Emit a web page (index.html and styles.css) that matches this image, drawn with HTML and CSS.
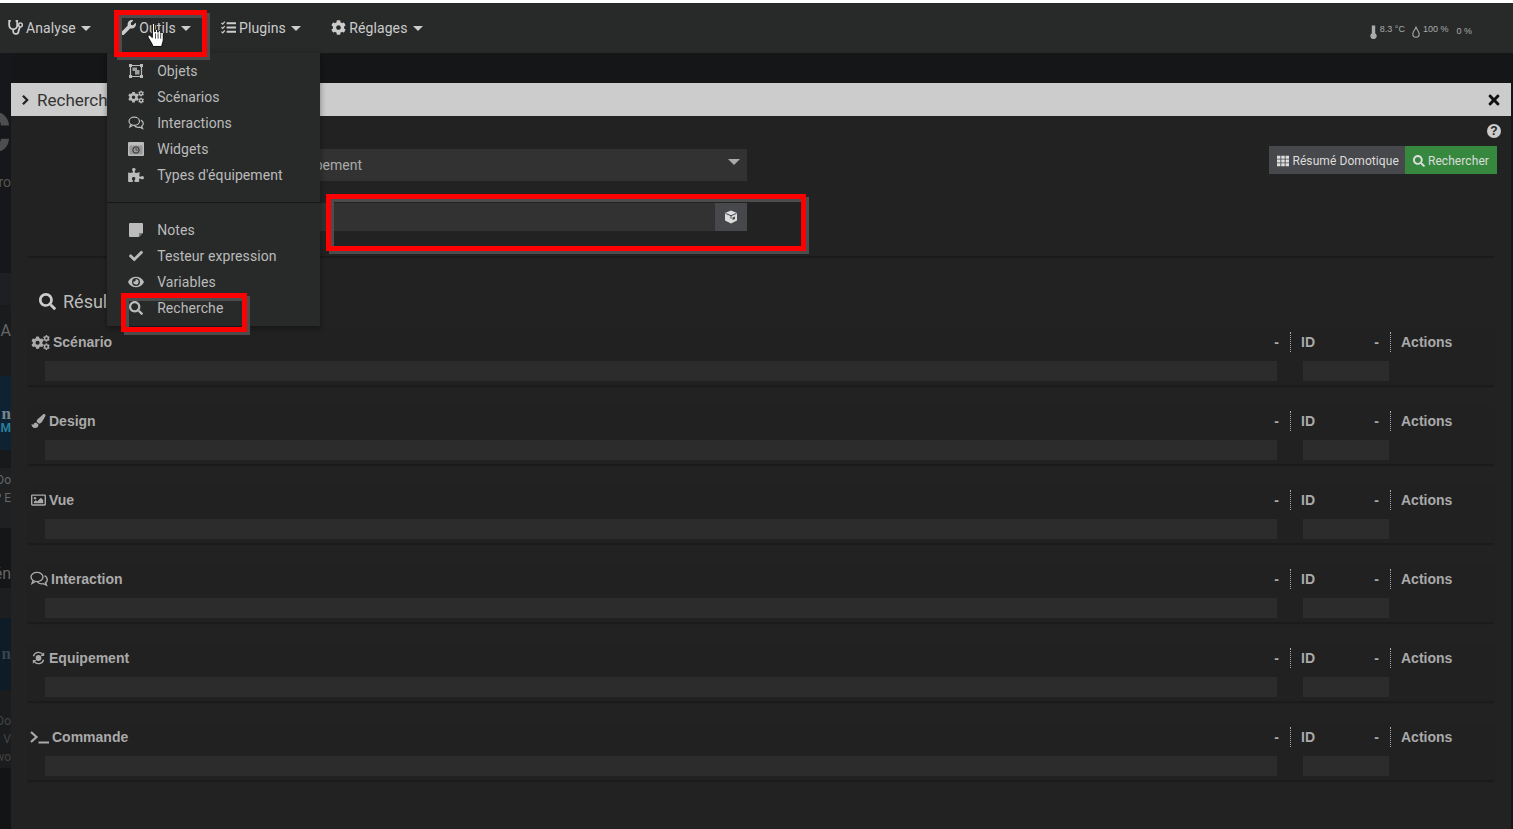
FILE: index.html
```html
<!DOCTYPE html>
<html lang="fr">
<head>
<meta charset="utf-8">
<title>Recherche</title>
<link rel="stylesheet" href="styles.css">
</head>
<body>
<svg class="defs" width="0" height="0" aria-hidden="true">
  <defs>
    <path id="p-cog" d="M487.4 315.7l-42.6-24.6c4.3-23.2 4.3-47 0-70.2l42.6-24.6c4.9-2.8 7.1-8.6 5.5-14-11.1-35.6-30-67.8-54.7-94.6-3.8-4.1-10-5.1-14.8-2.3L380.8 110c-17.9-15.4-38.5-27.3-60.8-35.1V25.8c0-5.6-3.9-10.5-9.4-11.7-36.7-8.2-74.3-7.8-109.2 0-5.5 1.2-9.4 6.1-9.4 11.7V75c-22.2 7.9-42.8 19.8-60.8 35.1L88.7 85.5c-4.9-2.8-11-1.9-14.8 2.3-24.7 26.7-43.6 58.9-54.7 94.6-1.7 5.4.6 11.2 5.5 14L67.3 221c-4.3 23.2-4.3 47 0 70.2l-42.6 24.6c-4.9 2.8-7.1 8.6-5.5 14 11.1 35.6 30 67.8 54.7 94.6 3.8 4.1 10 5.1 14.8 2.3l42.6-24.6c17.9 15.4 38.5 27.3 60.8 35.1v49.2c0 5.6 3.9 10.5 9.4 11.7 36.7 8.2 74.3 7.8 109.2 0 5.5-1.2 9.4-6.1 9.4-11.7v-49.2c22.2-7.9 42.8-19.8 60.8-35.1l42.6 24.6c4.9 2.8 11 1.9 14.8-2.3 24.7-26.7 43.6-58.9 54.7-94.6 1.5-5.5-.7-11.3-5.6-14.1zM256 336c-44.1 0-80-35.9-80-80s35.9-80 80-80 80 35.9 80 80-35.9 80-80 80z"/>
    <symbol id="i-search" viewBox="0 0 512 512"><path fill="currentColor" d="M505 442.7L405.3 343c-4.5-4.5-10.6-7-17-7H372c27.6-35.3 44-79.7 44-128C416 93.1 322.9 0 208 0S0 93.1 0 208s93.1 208 208 208c48.3 0 92.7-16.4 128-44v16.3c0 6.4 2.5 12.5 7 17l99.7 99.7c9.4 9.4 24.6 9.4 33.9 0l28.3-28.3c9.4-9.4 9.4-24.6.1-34zM208 336c-70.7 0-128-57.2-128-128 0-70.7 57.2-128 128-128 70.7 0 128 57.2 128 128 0 70.7-57.2 128-128 128z"/></symbol>
    <symbol id="i-check" viewBox="0 0 512 512"><path fill="currentColor" d="M173.898 439.404l-166.4-166.4c-9.997-9.997-9.997-26.206 0-36.204l36.203-36.204c9.997-9.998 26.207-9.998 36.204 0L192 312.69 432.095 72.596c9.997-9.997 26.207-9.997 36.204 0l36.203 36.204c9.997 9.997 9.997 26.206 0 36.204l-294.4 294.401c-9.998 9.997-26.207 9.997-36.204-.001z"/></symbol>
    <symbol id="i-wrench" viewBox="0 0 512 512"><path fill="currentColor" d="M507.73 109.1c-2.24-9.03-13.54-12.09-20.12-5.51l-74.36 74.36-67.88-11.31-11.31-67.88 74.36-74.36c6.62-6.62 3.43-17.9-5.66-20.16-47.38-11.74-99.55.91-136.58 37.93-39.64 39.64-50.55 97.1-34.05 147.2L18.74 402.76c-24.99 24.99-24.99 65.51 0 90.5 24.99 24.99 65.51 24.99 90.5 0l213.21-213.21c50.12 16.71 107.47 5.68 147.37-34.22 37.07-37.07 49.7-89.32 37.91-136.73z"/></symbol>
    <symbol id="i-times" viewBox="0 0 352 512"><path fill="currentColor" d="M242.72 256l100.07-100.07c12.28-12.28 12.28-32.19 0-44.48l-22.24-22.24c-12.28-12.28-32.19-12.28-44.48 0L176 189.28 75.93 89.21c-12.28-12.28-32.19-12.28-44.48 0L9.21 111.45c-12.28 12.28-12.28 32.19 0 44.48L109.28 256 9.21 356.07c-12.28 12.28-12.28 32.19 0 44.48l22.24 22.24c12.28 12.28 32.2 12.28 44.48 0L176 322.72l100.07 100.07c12.28 12.28 32.2 12.28 44.48 0l22.24-22.24c12.28-12.28 12.28-32.19 0-44.48L242.72 256z"/></symbol>
    <symbol id="i-eye" viewBox="0 0 576 512"><path fill="currentColor" d="M572.52 241.4C518.29 135.59 410.93 64 288 64S57.68 135.64 3.48 241.41a32.35 32.35 0 0 0 0 29.19C57.71 376.41 165.07 448 288 448s230.32-71.64 284.52-177.41a32.35 32.35 0 0 0 0-29.19zM288 400a144 144 0 1 1 144-144 143.93 143.93 0 0 1-144 144zm0-240a95.31 95.31 0 0 0-25.31 3.79 47.85 47.85 0 0 1-66.9 66.9A95.78 95.78 0 1 0 288 160z"/></symbol>
    <symbol id="i-cog" viewBox="0 0 512 512"><use href="#p-cog" fill="currentColor"/></symbol>
    <symbol id="i-cogs" viewBox="0 0 640 512"><use href="#p-cog" fill="currentColor" transform="translate(0 45) scale(.86)"/><use href="#p-cog" fill="currentColor" transform="translate(405 0) scale(.46)"/><use href="#p-cog" fill="currentColor" transform="translate(405 280) scale(.46)"/></symbol>
    <symbol id="i-puzzle" viewBox="0 0 576 512"><path fill="currentColor" d="M519.442 288.651c-41.519 0-59.5 31.593-82.058 31.593C377.409 320.244 432 144 432 144s-196.288 80-196.288-3.297c0-35.827 36.288-46.25 36.288-85.985C272 19.216 243.885 0 210.539 0c-34.654 0-66.366 18.891-66.366 56.346 0 41.364 31.711 59.277 31.711 81.75C175.885 207.719 0 166.758 0 166.758v333.237s178.635 41.047 178.635-28.662c0-22.473-40-40.107-40-81.471 0-37.456 29.25-56.346 63.577-56.346 33.673 0 61.788 19.216 61.788 54.717 0 39.735-36.288 50.158-36.288 85.985 0 60.803 129.675 25.73 181.23 25.73 0 0-34.725-120.101 25.827-120.101 35.962 0 46.423 36.152 86.308 36.152C556.712 416 576 387.99 576 354.443c0-34.199-18.962-65.792-56.558-65.792z"/></symbol>
    <symbol id="i-brush" viewBox="0 0 512 512"><path fill="currentColor" d="M167.02 309.34c-40.12 2.58-76.53 17.86-97.19 72.3-2.35 6.21-8 9.98-14.59 9.98-11.11 0-45.46-27.67-55.25-34.35C0 439.62 37.93 512 128 512c75.86 0 128-43.77 128-120.19 0-3.11-.65-6.08-.97-9.13l-88.01-73.34zM457.89 0c-15.16 0-29.37 6.71-40.21 16.45C213.27 199.05 192 203.34 192 257.09c0 13.7 3.25 26.76 8.73 38.7l63.82 53.18c7.21 1.8 14.64 3.03 22.39 3.03 62.11 0 98.11-45.47 211.16-256.46 7.38-14.35 13.9-29.85 13.9-45.99C512 20.64 486 0 457.89 0z"/></symbol>
    <symbol id="i-stetho" viewBox="0 0 15 15"><path fill="none" stroke="currentColor" stroke-width="1.800" d="M2.800.9H1.200v4.300a4 4 0 0 0 8 0V.9H7.600M5.200 9.200v1.800a2.600 2.600 0 0 0 5.300.5c.3-1.300.7-3 1.600-4.500"/><circle cx="12.500" cy="5" r="1.900" fill="none" stroke="currentColor" stroke-width="1.500"/></symbol>
    <symbol id="i-tasks" viewBox="0 0 16 14"><path fill="currentColor" d="M6 1.500h10v2H6zM6 6h10v2H6zM6 10.500h10v2H6z"/><path fill="none" stroke="currentColor" stroke-width="1.300" d="M.5 2l1.300 1.300L4 .8M.5 6.700L1.800 8 4 5.500M.5 11.400l1.300 1.300L4 10.200"/></symbol>
    <symbol id="i-object" viewBox="0 0 14 14"><path fill="none" stroke="currentColor" stroke-width="1.200" d="M1.500 1.500h11v11h-11z"/><path fill="currentColor" d="M0 0h3v3H0zM11 0h3v3h-3zM0 11h3v3H0zM11 11h3v3h-3z"/><path fill="currentColor" opacity=".8" d="M3.500 3.500h4.500v3.500H3.500zM6 6h4.500v4.500H6z"/></symbol>
    <symbol id="i-comments" viewBox="0 0 18 16"><g fill="none" stroke="currentColor" stroke-width="1.400"><ellipse cx="7" cy="6" rx="6" ry="4.600"/><path d="M3 9.500L2 12.500l3.500-2"/><path d="M14.600 4.700c1.700.9 2.700 2.200 2.700 3.800 0 1.300-.7 2.400-1.800 3.200l1 2.500-3.200-1.500c-2.500.5-5-.3-6.200-2"/></g></symbol>
    <symbol id="i-widget" viewBox="0 0 16 14"><path fill="currentColor" fill-rule="evenodd" d="M1 0h14a1 1 0 0 1 1 1v12a1 1 0 0 1-1 1H1a1 1 0 0 1-1-1V1a1 1 0 0 1 1-1zM1.500 3.500v9h13v-9z"/><rect x="1" y="3" width="14" height="10" fill="currentColor" opacity=".75"/><circle cx="8" cy="8" r="3.200" fill="none" stroke="#282a2a" stroke-width="1"/><path d="M8 6.300V8h1.500" fill="none" stroke="#282a2a" stroke-width=".8"/></symbol>
    <symbol id="i-note" viewBox="0 0 14 14"><path fill="currentColor" d="M1 0h12a1 1 0 0 1 1 1v8.500L9.500 14H1a1 1 0 0 1-1-1V1a1 1 0 0 1 1-1z"/><path fill="#777" d="M10 10h4l-4 4z"/></symbol>
    <symbol id="i-image" viewBox="0 0 16 14"><path fill="currentColor" fill-rule="evenodd" d="M1.500 1h13A1.500 1.500 0 0 1 16 2.500v9a1.500 1.500 0 0 1-1.500 1.500h-13A1.500 1.500 0 0 1 0 11.500v-9A1.500 1.500 0 0 1 1.500 1zm0 1.500v9h13v-9z"/><circle cx="4.300" cy="5" r="1.300" fill="currentColor"/><path fill="currentColor" d="M3 10.500V9l2-2 1.500 1.500L10.500 4.500 13 7v3.500z"/></symbol>
    <symbol id="i-cycle" viewBox="0 0 16 16"><g fill="none" stroke="currentColor" stroke-width="1.500"><path d="M2.200 6A6 6 0 0 1 13 4.200"/><path d="M13.800 10A6 6 0 0 1 3 11.800"/></g><path fill="currentColor" d="M14.500 1.500v4.300h-4.300zM1.500 14.500v-4.300h4.300z"/><circle cx="8" cy="8" r="3.300" fill="currentColor"/></symbol>
    <symbol id="i-terminal" viewBox="0 0 19 13"><path fill="none" stroke="currentColor" stroke-width="2.200" d="M1 1l5.500 5L1 11"/><path fill="currentColor" d="M8.500 10.500H19v2H8.500z"/></symbol>
    <symbol id="i-cube" viewBox="0 0 14 14"><path fill="currentColor" d="M7 .5L1 2.900v7.600L7 13.500l6-3V2.900z"/><path fill="none" stroke="#47484b" stroke-width="1" d="M1.500 3.400L7 5.700l5.500-2.300M7 5.700v3"/><path fill="#47484b" d="M8.500 7.500l2.500-1v2.500l-2.500 1z"/></symbol>
    <symbol id="i-grid" viewBox="0 0 14 12"><path fill="currentColor" d="M0 0h4v3.500H0zM5 0h4v3.500H5zM10 0h4v3.500h-4zM0 4.250h4v3.500H0zM5 4.250h4v3.500H5zM10 4.250h4v3.500h-4zM0 8.500h4V12H0zM5 8.500h4V12H5zM10 8.500h4V12h-4z"/></symbol>
    <symbol id="i-chevron" viewBox="0 0 10 14"><path fill="none" stroke="currentColor" stroke-width="2.600" d="M2 2l5 5-5 5"/></symbol>
    <symbol id="i-thermo" viewBox="0 0 7 14"><path fill="currentColor" d="M1.800.5h3.400V8.300a3.200 3.200 0 1 1-3.400 0z"/></symbol>
    <symbol id="i-drop" viewBox="0 0 8 12"><path fill="none" stroke="currentColor" stroke-width="1.100" d="M4 1.200C3 3.800.8 5.500.8 8a3.200 3.200 0 0 0 6.400 0C7.200 5.500 5 3.800 4 1.200z"/></symbol>
  </defs>
</svg>

<div class="page">
  <div class="whiteline"></div>

  <header class="navbar">
    <nav class="nav">
      <a class="nav-item"><svg class="ico ico-14"><use href="#i-stetho"/></svg>Analyse<i class="caret"></i></a>
      <a class="nav-item nav-tools"><svg class="ico ico-14"><use href="#i-wrench"/></svg>Outils<i class="caret"></i>
        <div class="dropdown">
          <ul class="menu">
            <li><svg class="ico ico-menu"><use href="#i-object"/></svg>Objets</li>
            <li><svg class="ico ico-menu"><use href="#i-cogs"/></svg>Scénarios</li>
            <li><svg class="ico ico-menu"><use href="#i-comments"/></svg>Interactions</li>
            <li><svg class="ico ico-menu"><use href="#i-widget"/></svg>Widgets</li>
            <li><svg class="ico ico-menu"><use href="#i-puzzle"/></svg>Types d'équipement</li>
          </ul>
          <div class="menu-divider"></div>
          <ul class="menu">
            <li><svg class="ico ico-menu"><use href="#i-note"/></svg>Notes</li>
            <li><svg class="ico ico-menu"><use href="#i-check"/></svg>Testeur expression</li>
            <li><svg class="ico ico-menu"><use href="#i-eye"/></svg>Variables</li>
            <li><svg class="ico ico-menu"><use href="#i-search"/></svg>Recherche</li>
          </ul>
        </div>
      </a>
      <a class="nav-item"><svg class="ico ico-14"><use href="#i-tasks"/></svg>Plugins<i class="caret"></i></a>
      <a class="nav-item"><svg class="ico ico-14"><use href="#i-cog"/></svg>Réglages<i class="caret"></i></a>
    </nav>
    <div class="weather">
      <svg class="thermo"><use href="#i-thermo"/></svg><span>8.3 °C</span>
      <svg class="drop"><use href="#i-drop"/></svg><span>100 %</span>
      <span class="wind">0 %</span>
    </div>
  </header>

  <div class="stage">
    <aside class="rail">
      <div class="rail-block rail-top"><div class="rail-big">C</div><div class="rail-ro">ro</div></div>
      <div class="rail-block rail-band1"></div>
      <div class="rail-block rail-band2"><div class="rail-a">A</div></div>
      <div class="rail-block rail-blue"><span class="rail-n">n</span><span class="rail-m">M</span></div>
      <div class="rail-block rail-gap"></div>
      <div class="rail-block rail-card"><div class="rail-line rail-do">Do</div><div class="rail-line">P E</div></div>
      <div class="rail-block rail-band3"><div class="rail-a">én</div></div>
      <div class="rail-block rail-band4"></div>
      <div class="rail-block rail-blue2"><span class="rail-n">n</span></div>
      <div class="rail-block rail-card2"><div class="rail-line">Do</div><div class="rail-line">V</div><div class="rail-line">wo</div></div>
    </aside>

    <main class="modal">
      <div class="modal-head">
        <svg class="chevron"><use href="#i-chevron"/></svg>
        <span class="modal-title">Recherche</span>
        <svg class="close"><use href="#i-times"/></svg>
      </div>
      <div class="modal-body">
        <div class="help"><span class="help-dot">?</span></div>
        <div class="toolbar">
          <form class="search-form">
            <div class="select"><span>Type d'équipement</span><i class="select-arrow"></i></div>
            <div class="input-group"><div class="input"></div><span class="input-btn"><svg class="ico ico-cube"><use href="#i-cube"/></svg></span></div>
          </form>
          <div class="actions">
            <a class="btn btn-grey"><svg class="ico ico-btn"><use href="#i-grid"/></svg>Résumé Domotique</a>
            <a class="btn btn-green"><svg class="ico ico-btn"><use href="#i-search"/></svg>Rechercher</a>
          </div>
        </div>
        <div class="rule"></div>
        <h2 class="results-title"><svg class="ico ico-title"><use href="#i-search"/></svg>Résultats</h2>

        <section class="result">
          <div class="col-name"><span class="label"><svg class="ico ico-l18"><use href="#i-cogs"/></svg>Scénario</span><span class="dash">-</span></div>
          <div class="col-id"><span class="label">ID</span><span class="dash">-</span></div>
          <div class="col-act"><span class="label">Actions</span></div>
          <div class="bar bar-name"></div><div class="bar bar-id"></div>
        </section>
        <section class="result">
          <div class="col-name"><span class="label"><svg class="ico ico-l14"><use href="#i-brush"/></svg>Design</span><span class="dash">-</span></div>
          <div class="col-id"><span class="label">ID</span><span class="dash">-</span></div>
          <div class="col-act"><span class="label">Actions</span></div>
          <div class="bar bar-name"></div><div class="bar bar-id"></div>
        </section>
        <section class="result">
          <div class="col-name"><span class="label"><svg class="ico ico-l14"><use href="#i-image"/></svg>Vue</span><span class="dash">-</span></div>
          <div class="col-id"><span class="label">ID</span><span class="dash">-</span></div>
          <div class="col-act"><span class="label">Actions</span></div>
          <div class="bar bar-name"></div><div class="bar bar-id"></div>
        </section>
        <section class="result">
          <div class="col-name"><span class="label"><svg class="ico ico-l16"><use href="#i-comments"/></svg>Interaction</span><span class="dash">-</span></div>
          <div class="col-id"><span class="label">ID</span><span class="dash">-</span></div>
          <div class="col-act"><span class="label">Actions</span></div>
          <div class="bar bar-name"></div><div class="bar bar-id"></div>
        </section>
        <section class="result">
          <div class="col-name"><span class="label"><svg class="ico ico-l14"><use href="#i-cycle"/></svg>Equipement</span><span class="dash">-</span></div>
          <div class="col-id"><span class="label">ID</span><span class="dash">-</span></div>
          <div class="col-act"><span class="label">Actions</span></div>
          <div class="bar bar-name"></div><div class="bar bar-id"></div>
        </section>
        <section class="result">
          <div class="col-name"><span class="label"><svg class="ico ico-term"><use href="#i-terminal"/></svg>Commande</span><span class="dash">-</span></div>
          <div class="col-id"><span class="label">ID</span><span class="dash">-</span></div>
          <div class="col-act"><span class="label">Actions</span></div>
          <div class="bar bar-name"></div><div class="bar bar-id"></div>
        </section>
      </div>
    </main>
  </div>

  <div class="mark mark-tools"></div>
  <div class="mark mark-input"></div>
  <div class="mark mark-search"></div>
  <svg class="hand" viewBox="0 0 17 24"><path fill="#fff" stroke="#000" stroke-width=".9" stroke-linejoin="round" d="M5 1.500c0-1.300 2.200-1.300 2.200 0v7l.8-.2V7c0-1 2-1 2 .2v1.500l.8.1V8c0-1 2-1 2 .3v1l.7.2c0-1 2-.8 2 .5v6c0 2-1 3-1.500 6.500H5.500C5 19.500 1.500 15.500.8 13.500c-.5-1.500 1-2.500 2-1.500L5 14z"/><path stroke="#000" stroke-width=".7" d="M8 10v5M10.500 10v5M13 10v5"/></svg>
</div>
</body>
</html>
```
FILE: styles.css
```css
* { box-sizing: border-box; }
html, body { margin: 0; padding: 0; height: 100%; overflow: hidden; }
body { background: #141618; font-family: Roboto, "Liberation Sans", sans-serif; font-size: 14px; color: #bbb; }
.defs { position: absolute; }
ul { list-style: none; margin: 0; padding: 0; }
h2 { margin: 0; }

.page { position: relative; width: 1513px; height: 829px; overflow: hidden; }
.whiteline { height: 3px; background: #fff; }

.ico { color: inherit; flex: none; display: block; }

/* top bar */
.navbar { height: 50px; background: #282a2a; display: flex; justify-content: space-between; }
.nav { display: flex; padding-left: 8px; gap: 30px; }
.nav-item { position: relative; display: flex; align-items: center; height: 50px; color: #ccc; padding-bottom: 1px; letter-spacing: .1px; }
.ico-14 { width: 15px; height: 15px; margin-right: 3px; }
.caret { width: 0; height: 0; margin-left: 5.300px; margin-top: 2px; border-left: 5px solid transparent; border-right: 5px solid transparent; border-top: 5px solid #ccc; }
.weather { display: flex; align-items: flex-start; padding: 20px 41px 0 0; font-family: "Liberation Sans", sans-serif; font-size: 9px; line-height: 12px; color: #aaa; }
.thermo { width: 7px; height: 14px; color: #aaa; margin: 2px 3px 0 0; }
.drop { width: 8px; height: 12px; color: #aaa; margin: 3px 3px 0 7px; }
.wind { margin: 2px 0 0 8px; }

/* dropdown */
.dropdown { position: absolute; left: -14px; top: 50px; width: 213px; height: 273px; background: #282a2a; box-shadow: 0 2px 6px rgba(0,0,0,.4); padding-top: 5px; z-index: 5; letter-spacing: 0; }
.menu li { height: 26px; display: flex; align-items: center; padding-left: 21px; color: #bbb; font-size: 14px; letter-spacing: .07px; }
.ico-menu { width: 16px; height: 14px; margin-right: 13px; color: #bbb; }
.menu-divider { height: 1px; background: #151617; margin: 14px 0 14px; }

/* stage */
.stage { display: flex; height: 776px; }
.rail { width: 11px; overflow: hidden; background: #121416; color: #666; white-space: nowrap; direction: rtl; flex: none; display: flex; flex-direction: column; }
.rail-block { flex: none; }
.rail-top { height: 220px; background: #15171a; padding-top: 55px; }
.rail-big { font: 700 56px/50px Roboto, sans-serif; color: #4d4e50; height: 50px; }
.rail-ro { font: 14px/16px Roboto, sans-serif; color: #555; margin-top: 16px; height: 16px; }
.rail-band1 { height: 32px; background: #1d1f22; }
.rail-band2 { height: 71px; background: #191b1d; padding-top: 17px; }
.rail-a { font: 16px/18px Roboto, sans-serif; height: 18px; color: #666; }
.rail-blue { height: 74px; background: #0d2233; display: flex; flex-direction: column; padding-top: 29px; }
.rail-n { font: 700 17px/17px "Liberation Serif", serif; color: #77858f; }
.rail-m { font: 700 12px/12px Roboto, sans-serif; color: #2a7d98; }
.rail-gap { height: 18px; background: #17191b; }
.rail-card { height: 60px; background: #1e2022; padding-top: 3px; }
.rail-line { font: 12px/18px Roboto, sans-serif; height: 18px; color: #666; }
.rail-band3 { height: 60px; background: #141618; padding-top: 37px; }
.rail-band4 { height: 30px; background: #1c1e20; }
.rail-blue2 { height: 72px; background: #0e1c28; padding-top: 27px; }
.rail-blue2 .rail-n { color: #39444c; }
.rail-card2 { height: 78px; background: #1a1c1e; padding-top: 22px; }
.rail-card2 .rail-line { color: #444; }

.modal { width: 1500px; flex: none; margin-top: 30px; background: #222; }
.modal-head { height: 33px; background: #ccc; color: #333; display: flex; align-items: center; padding: 0 11px 0 10px; }
.chevron { width: 9px; height: 12px; color: #222; margin-right: 7px; }
.modal-title { font-size: 17px; flex: 1; }
.close { width: 12px; height: 16px; color: #111; }

.modal-body { padding: 8px 17px 0 17px; }
.help { display: flex; justify-content: flex-end; height: 14px; margin-right: -7px; }
.help-dot { width: 14px; height: 14px; border-radius: 50%; background: #ccc; color: #222; font: 700 12px/14px "Liberation Sans", sans-serif; text-align: center; }
.toolbar { display: flex; justify-content: space-between; margin-top: 8px; }
.search-form { margin: 3px 0 0 200px; width: 519px; }
.select { height: 32px; background: #323232; color: #aaa; display: flex; align-items: center; justify-content: space-between; padding: 0 7px 0 17px; font-size: 14px; position: relative; }
.select-arrow { width: 0; height: 0; margin-top: -6px; border-left: 6px solid transparent; border-right: 6px solid transparent; border-top: 6px solid #aaa; }
.input-group { display: flex; height: 28px; margin-top: 22px; background: #323232; }
.input { flex: 1; }
.input-btn { width: 32px; background: #47484b; display: flex; align-items: center; justify-content: center; }
.ico-cube { width: 14px; height: 14px; color: #ddd; }
.actions { display: flex; height: 28px; margin-right: -3px; }
.btn { display: flex; align-items: center; height: 28px; padding-top: 1px; font-size: 12px; color: #ddd; letter-spacing: .08px; }
.btn-grey { background: #47484b; padding-left: 8px; padding-right: 6px; }
.btn-green { background: #37883f; padding-left: 8px; padding-right: 8px; }
.ico-btn { width: 12px; height: 12px; margin-right: 3px; }

.rule { height: 2px; background: #1a1a1a; margin-top: 25px; }
.results-title { display: flex; align-items: center; height: 20px; margin: 33px 0 16px 11px; font-size: 18px; font-weight: 400; color: #bbb; white-space: nowrap; }
.ico-title { width: 17px; height: 17px; margin-right: 7px; color: #ccc; }

/* result tables */
.result { display: grid; grid-template-columns: 1262px 100px 104px; grid-template-rows: 34px 20px 4px; height: 58px; margin-bottom: 21px; background: #212121; box-shadow: 0 2px 1px #1b1b1b; }
.col-name, .col-id, .col-act { display: flex; align-items: center; justify-content: space-between; height: 20px; margin-top: 5px; }
.col-name { padding: 0 11px 0 3px; }
.col-id { padding: 0 11px 0 10px; border-left: 1px dotted #aaa; }
.col-act { padding-left: 10px; border-left: 1px dotted #aaa; }
.label { display: flex; align-items: center; font-family: "Liberation Sans", sans-serif; font-weight: 700; font-size: 14px; color: #aaa; white-space: nowrap; }
.dash { font-family: "Liberation Sans", sans-serif; font-weight: 700; color: #aaa; }
.ico-l18 { width: 19px; height: 15px; margin-right: 3px; }
.ico-l14 { width: 15px; height: 14px; margin-right: 3px; }
.ico-l16 { width: 18px; height: 16px; margin: 0 3px 0 -1px; }
.ico-term { width: 19px; height: 13px; margin: 0 3px 0 -1px; }
.bar { background: #2c2c2c; height: 20px; grid-row: 2; }
.bar-name { grid-column: 1; margin: 0 13px 0 17px; }
.bar-id { grid-column: 2; margin: 0 1px 0 13px; }

/* annotation overlays */
.mark { position: absolute; border: 5px solid #f00; box-shadow: 3px 3px 0 #4c4c4c, inset 3px 3px 0 #4c4c4c; z-index: 8; }
.mark-tools { left: 114px; top: 10px; width: 93px; height: 47px; }
.mark-input { left: 326px; top: 194px; width: 480px; height: 57px; }
.mark-search { left: 121px; top: 293px; width: 126px; height: 39px; }
.hand { position: absolute; left: 147px; top: 23px; width: 18px; height: 25px; z-index: 9; }
```
